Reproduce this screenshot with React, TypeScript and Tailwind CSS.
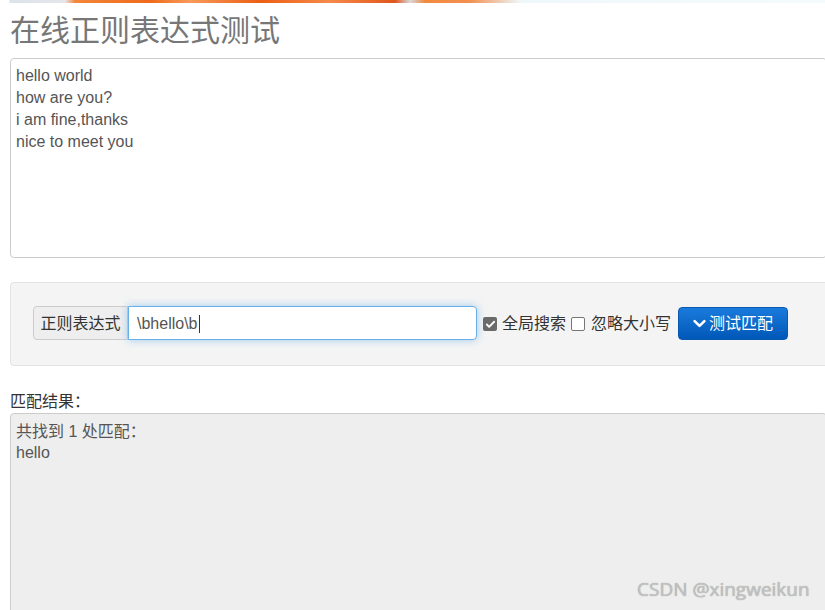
import { Check } from 'lucide-react';

const cjk = "font-['Liberation_Sans','Noto_Sans_CJK_SC',sans-serif]";

function ChevronIcon() {
  return (
    <svg viewBox="0 0 16 16" width={13} height={13} className="shrink-0">
      <path d="M2 5 L8 11 L14 5" stroke="#fff" strokeWidth="3.2" fill="none" strokeLinecap="round" strokeLinejoin="round" />
    </svg>
  );
}

export default function App() {
  return (
    <div className={`relative h-[610px] w-[825px] overflow-hidden bg-white ${cjk}`}>
      {/* banner strip cut off at the top */}
      <div className="h-[3px] w-full bg-[linear-gradient(90deg,#fff_0px,#fff_9px,#dde3ea_10px,#e4e6ea_65px,#f2873a_75px,#ef6a1c_150px,#f79a5a_190px,#ec5f14_260px,#f58a4a_330px,#e0561a_395px,#d6d9de_410px,#f28a3e_425px,#f29050_470px,#eef7fa_520px,#f5fbfd_825px)]" />

      <div className="ml-[10px] mt-[11px] h-[33px] text-[30px] leading-[33px] text-[#777]">在线正则表达式测试</div>

      <div className="ml-[10px] mt-[11px] h-[200px] w-[817px] rounded-[4px] border border-[#ccc] bg-white px-[5px] pb-[5px] pt-[6px] text-[16px] leading-[22px] text-[#555]">
        <div>hello world</div>
        <div>how are you?</div>
        <div>i am fine,thanks</div>
        <div>nice to meet you</div>
      </div>

      <div className="ml-[10px] mt-[24px] h-[84px] w-[820px] rounded-[4px] border border-[#e3e3e3] bg-[#f4f4f4] pl-[22px] pt-[23px]">
        <div className="flex items-center">
          <div className="flex h-[34px] w-[95px] items-center justify-center rounded-l-[4px] border border-[#ccc] bg-[#eee] pt-[2px] text-[16px] text-[#333]">正则表达式</div>
          <div className="flex h-[34px] w-[349px] items-center rounded-r-[4px] border border-[#66afe9] bg-white pl-[8px] pt-[2px] text-[16px] text-[#555] shadow-[0_0_8px_rgba(102,175,233,0.6)]">
            <span>\bhello\b</span>
            <span className="ml-[1px] h-[18px] w-px bg-[#333]" />
          </div>
          <div className="ml-[6px] mt-[2px] flex h-[14px] w-[14px] items-center justify-center rounded-[2px] bg-[#6a6a6a]">
            <Check size={11} strokeWidth={4} color="#fff" />
          </div>
          <span className="ml-[5px] mt-[2px] text-[16px] text-[#333]">全局搜索</span>
          <div className="ml-[5px] mt-[2px] h-[14px] w-[14px] rounded-[2px] border border-[#767676] bg-white" />
          <span className="ml-[6px] mt-[2px] text-[16px] text-[#333]">忽略大小写</span>
          <button className="ml-[7px] flex h-[33px] w-[110px] items-center justify-center gap-[3px] rounded-[4px] border border-[#0a58b0] bg-[linear-gradient(180deg,#1a7bdc,#0058b8)] pt-[1px] text-[16px] text-white">
            <ChevronIcon />
            <span>测试匹配</span>
          </button>
        </div>
      </div>

      <div className="ml-[10px] mt-[26px] text-[16px] leading-[20px] text-[#333]">匹配结果：</div>
      <div className="ml-[10px] mt-[1px] h-[220px] w-[817px] rounded-[4px] border border-[#ccc] bg-[#eee] px-[5px] py-[7px] text-[16px] leading-[21px] text-[#555]">
        <div>共找到 1 处匹配：</div>
        <div>hello</div>
      </div>

      <div className="absolute left-[637px] top-[575px] font-['Open_Sans',sans-serif] text-[19px] text-[#c2c2c2] [text-shadow:0_0_1px_#999]">CSDN @xingweikun</div>
    </div>
  );
}
